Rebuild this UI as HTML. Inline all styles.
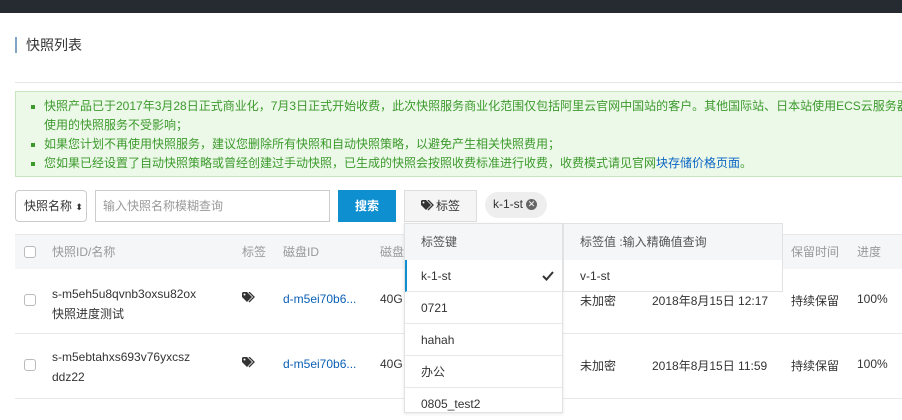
<!DOCTYPE html>
<html><head><meta charset="utf-8"><style>
*{box-sizing:border-box;margin:0;padding:0}
body{width:902px;height:412px;overflow:hidden;background:#fff;font-family:"Liberation Sans","Noto Sans CJK SC",sans-serif;font-size:12px;color:#333;position:relative}
.abs{position:absolute}
.top{left:0;top:0;width:902px;height:13px;background:#262a31}
.title{left:15px;top:37px;font-size:14px;color:#333;border-left:2px solid #7fa4c4;padding-left:9px;height:16px;line-height:16px}
.hr{left:15px;top:82px;width:887px;height:1px;background:#e5e5e5}
.notice{left:15px;top:91px;width:900px;height:86px;background:#ecf8e8;border:1px solid #c7e6bd;color:#3c9a2d;font-size:12px;line-height:19px;padding:5px 0 0 28px}
.notice div{position:relative;white-space:nowrap}
.notice div.b:before{content:"";position:absolute;left:-13px;top:8px;width:4px;height:4px;background:#3c9a2d}
.notice a{color:#0b66c3}
.sel{left:15px;top:190px;width:72px;height:32px;border:1px solid #ccc;border-radius:4px;line-height:30px;padding-left:8px}
.inp{left:95px;top:190px;width:235px;height:32px;border:1px solid #ccc;line-height:30px;padding-left:7px;color:#999}
.btn{left:338px;top:190px;width:58px;height:32px;background:#0e8fd0;color:#fff;font-weight:bold;text-align:center;line-height:32px}
.tagbtn{left:404px;top:190px;width:73px;height:32px;border:1px solid #ddd;background:#f5f5f5;line-height:30px;padding-left:16px}
.chip{left:485px;top:192px;width:62px;height:26px;background:#eee;border-radius:13px;line-height:24px;padding-left:8px}
.x{display:inline-block;width:11px;height:11px;border-radius:50%;background:#666;color:#fff;font-size:9px;line-height:11px;text-align:center;vertical-align:middle;margin-left:3px}
.th{left:15px;top:234px;width:887px;height:35px;background:#f5f6f8;border-top:1px solid #e8e8e8;color:#999;line-height:34px}
.row{left:15px;width:887px;height:65px;border-bottom:1px solid #e8e8e8}
.cb{position:absolute;left:9px;width:12px;height:12px;border:1px solid #bbb;border-radius:3px;background:#fff}
.t{position:absolute;white-space:nowrap}
.link{color:#0a5fb4}
.dd{left:404px;top:223px;width:159px;height:190px;background:#fff;border:1px solid #e2e2e2;box-shadow:0 1px 3px rgba(0,0,0,.1)}
.dd2{left:563px;top:223px;width:220px;height:69px;background:#fff;border:1px solid #e2e2e2}
.ddh{height:36px;background:#f5f6f8;line-height:36px;padding-left:16px;color:#555}
.it{height:32px;line-height:32px;padding-left:16px;border-bottom:1px solid #e8e8e8;position:relative}
</style></head><body>
<div class="abs top"></div>
<div class="abs title">快照列表</div>
<div class="abs hr"></div>
<div class="abs notice">
<div class="b">快照产品已于2017年3月28日正式商业化，7月3日正式开始收费，此次快照服务商业化范围仅包括阿里云官网中国站的客户。其他国际站、日本站使用ECS云服务器</div>
<div>使用的快照服务不受影响；</div>
<div class="b">如果您计划不再使用快照服务，建议您删除所有快照和自动快照策略，以避免产生相关快照费用；</div>
<div class="b">您如果已经设置了自动快照策略或曾经创建过手动快照，已生成的快照会按照收费标准进行收费，收费模式请见官网<a>块存储价格页面</a>。</div>
</div>
<div class="abs sel">快照名称 <span style="font-size:9px">⬍</span></div>
<div class="abs inp">输入快照名称模糊查询</div>
<div class="abs btn">搜索</div>
<div class="abs tagbtn"><svg width="15" height="11" viewBox="0 0 15 11" style="vertical-align:-1px"><path d="M0 1V5L5 10 10 5 5 0H1Z" fill="#333"/><path d="M7 0 12 5 7 10" stroke="#333" fill="none" stroke-width="1.3"/><circle cx="2.5" cy="2.5" r="1" fill="#f5f5f5"/></svg>标签</div>
<div class="abs chip">k-1-st<span class="x">✕</span></div>
<div class="abs th"><span class="cb" style="top:11px"></span><span class="t" style="left:37px">快照ID/名称</span><span class="t" style="left:227px">标签</span><span class="t" style="left:268px">磁盘ID</span><span class="t" style="left:365px">磁盘</span><span class="t" style="left:776px">保留时间</span><span class="t" style="left:842px">进度</span></div>
<div class="abs row" style="top:269px"><span class="cb" style="top:25px"></span><span class="t" style="left:37px;top:15px;line-height:20px">s-m5eh5u8qvnb3oxsu82ox<br>快照进度测试</span><span class="t" style="left:227px;top:23px"><svg width="15" height="11" viewBox="0 0 15 11"><path d="M0 1V5L5 10 10 5 5 0H1Z" fill="#333"/><path d="M7 0 12 5 7 10" stroke="#333" fill="none" stroke-width="1.3"/><circle cx="2.5" cy="2.5" r="1" fill="#fff"/></svg></span><span class="t link" style="left:268px;top:23px">d-m5ei70b6...</span><span class="t" style="left:365px;top:23px">40G</span><span class="t" style="left:565px;top:23px">未加密</span><span class="t" style="left:637px;top:23px">2018年8月15日 12:17</span><span class="t" style="left:776px;top:23px">持续保留</span><span class="t" style="left:842px;top:23px">100%</span></div>
<div class="abs row" style="top:334px"><span class="cb" style="top:25px"></span><span class="t" style="left:37px;top:13px;line-height:20px">s-m5ebtahxs693v76yxcsz<br>ddz22</span><span class="t" style="left:227px;top:23px"><svg width="15" height="11" viewBox="0 0 15 11"><path d="M0 1V5L5 10 10 5 5 0H1Z" fill="#333"/><path d="M7 0 12 5 7 10" stroke="#333" fill="none" stroke-width="1.3"/><circle cx="2.5" cy="2.5" r="1" fill="#fff"/></svg></span><span class="t link" style="left:268px;top:23px">d-m5ei70b6...</span><span class="t" style="left:365px;top:23px">40G</span><span class="t" style="left:565px;top:23px">未加密</span><span class="t" style="left:637px;top:23px">2018年8月15日 11:59</span><span class="t" style="left:776px;top:23px">持续保留</span><span class="t" style="left:842px;top:23px">100%</span></div>
<div class="abs dd"><div class="ddh">标签键</div>
<div class="it" style="border-left:2px solid #0e8fd0;padding-left:14px">k-1-st<svg width="12" height="10" viewBox="0 0 12 10" style="position:absolute;right:8px;top:11px"><path d="M1 5 4.5 8.5 11 1" stroke="#333" stroke-width="2" fill="none"/></svg></div>
<div class="it">0721</div><div class="it">hahah</div><div class="it">办公</div><div class="it" style="border:0">0805_test2</div></div>
<div class="abs dd2"><div class="ddh">标签值 :输入精确值查询</div><div class="it" style="border:0">v-1-st</div></div>
</body></html>
